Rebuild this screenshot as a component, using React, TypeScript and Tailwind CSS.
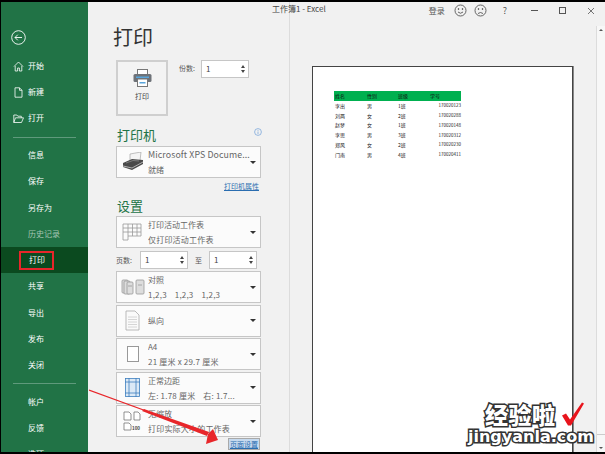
const font = { fontFamily: '"Noto Sans CJK SC", "Liberation Sans", sans-serif' };

const navTop = [
  { label: "开始", icon: "home" },
  { label: "新建", icon: "file" },
  { label: "打开", icon: "open" },
];
const navMid = ["信息", "保存", "另存为", "历史记录", "打印", "共享", "导出", "发布", "关闭"];
const navBottom = ["帐户", "反馈", "选项"];

const NavIcon = ({ name }: { name: string }) => (
  <svg width="11" height="11" viewBox="0 0 11 11" fill="none" stroke="white" strokeWidth="0.8">
    {name === "home" && <path d="M1 5.500 5.500 1 10 5.500M2.200 5v5h2.400V7h1.800v3h2.400V5" />}
    {name === "file" && <path d="M2 .8h4.500L9 3.300V10.200H2ZM6.500.8v2.500H9" />}
    {name === "open" && <path d="M.8 9.500V2h3l1 1.200h3.500v1.600M.8 9.500 2.500 4.800H10.500L8.500 9.500Z" />}
  </svg>
);

const Caret = () => (
  <div className="w-0 h-0 border-l-[3px] border-r-[3px] border-t-[3px] border-l-transparent border-r-transparent border-t-[#333] shrink-0" />
);

const Spinner = ({ w }: { w: string }) => (
  <div className={`${w} h-[18px] bg-white border border-[#c6c6c6] flex items-center justify-between pl-1 pr-[3px] text-[8px] text-[#444]`}>
    <span>1</span>
    <div className="flex flex-col gap-[2px]">
      <div className="w-0 h-0 border-l-[2px] border-r-[2px] border-b-[3px] border-l-transparent border-r-transparent border-b-[#444]" />
      <div className="w-0 h-0 border-l-[2px] border-r-[2px] border-t-[3px] border-l-transparent border-r-transparent border-t-[#444]" />
    </div>
  </div>
);

const Dropdown = ({ icon, line1, line2, latin }: { icon: React.ReactNode; line1: string; line2?: string; latin?: boolean }) => (
  <div className="h-[32px] w-[145px] shrink-0 bg-[#fbfbfb] border border-[#c6c6c6] flex items-center pr-[4px]">
    <div className="w-[31px] flex justify-center shrink-0">{icon}</div>
    <div className="flex-1 text-[8px] leading-[15px] text-[#666] whitespace-pre overflow-hidden">
      <div className={latin ? "text-[8.800px] tracking-[0.1px]" : ""}>{line1}</div>
      {line2 && <div className={latin ? "" : "tracking-[0.2px]"}>{line2}</div>}
    </div>
    <Caret />
  </div>
);

const Sheet = () => (
  <svg width="22" height="20" viewBox="0 0 22 20" fill="none" stroke="#999" strokeWidth="0.8">
    <path d="M1 2h18v12H6v4H1ZM1 6h18M1 10h18M6 2v12M10.500 2v12M15 2v12" />
  </svg>
);
const Collate = () => (
  <svg width="24" height="18" viewBox="0 0 24 18" fill="#ddd" stroke="#999" strokeWidth="0.8">
    <rect x="1" y="2" width="6" height="13" rx="1" />
    <rect x="3" y="3" width="6" height="13" rx="1" />
    <rect x="6" y="4" width="6" height="12" rx="1" />
    <rect x="15" y="2" width="8" height="14" rx="1" />
    <path d="M7 8h4M17 7h4" fill="none" />
  </svg>
);
const Portrait = () => (
  <svg width="15" height="21" viewBox="0 0 15 21" fill="#fafafa" stroke="#aaa" strokeWidth="0.8">
    <path d="M1 1h9l4 4v15H1Z" />
    <path d="M3 7h9M3 9.500h9M3 12h9M3 14.500h9M3 17h9" fill="none" stroke="#ccc" />
  </svg>
);
const Page = () => <div className="w-[12px] h-[16px] bg-white border border-[#999]" />;
const Margins = () => (
  <svg width="15" height="19" viewBox="0 0 15 19" fill="#dbe9f6" stroke="#3f7fbf" strokeWidth="0.8">
    <rect x="0.500" y="0.500" width="14" height="18" />
    <path d="M4 0v19M11 0v19M0 4h15M0 15h15" fill="none" />
  </svg>
);
const NoScale = () => (
  <svg width="20" height="22" viewBox="0 0 20 22" fill="white" stroke="#666" strokeWidth="0.7">
    <path d="M1 2h5l2 2v6H1ZM11 2h4l2 2v6h-6ZM1 13h5l2 2v5H1Z" />
    <text x="9" y="20" fontSize="4.500" fontWeight="700" fill="#444" stroke="none">100</text>
  </svg>
);

const PrinterIcon = () => (
  <svg width="19" height="18" viewBox="0 0 19 18">
    <rect x="4.500" y="0.500" width="10" height="6" fill="#fff" stroke="#777" />
    <rect x="0.500" y="5" width="18" height="8" rx="1.500" fill="#6e7278" />
    <rect x="3" y="7.500" width="13" height="1.500" fill="#59a5dc" />
    <rect x="4.500" y="10" width="10" height="7.500" fill="#fff" stroke="#777" />
    <rect x="6.500" y="13" width="6" height="1.500" fill="#59a5dc" />
  </svg>
);

const FaxIcon = () => (
  <svg width="22" height="20" viewBox="0 0 22 20">
    <path d="M8 2 19 0 18 9 8 10Z" fill="#f4f4f4" stroke="#999" strokeWidth="0.6" />
    <path d="M1 11 10 7 21 8V12L10 18 1 15Z" fill="#4a4a4a" />
    <path d="M1 14 10 16 21 10" stroke="#ccc" strokeWidth="0.8" fill="none" />
    <path d="M4 11 11 8.500 17 9" stroke="#888" strokeWidth="0.8" fill="none" />
  </svg>
);

const rows = [
  ["李出", "男", "1班", "170020123"],
  ["刘两", "女", "2班", "170020288"],
  ["赵梦", "女", "1班", "170020148"],
  ["李思", "男", "3班", "170020312"],
  ["郑风", "女", "2班", "170020230"],
  ["门南", "男", "4班", "170020411"],
];

const Face = ({ sad }: { sad?: boolean }) => (
  <svg width="13" height="13" viewBox="0 0 13 13" fill="none" stroke="#555" strokeWidth="0.9">
    <circle cx="6.500" cy="6.500" r="5.500" />
    <circle cx="4.500" cy="5" r="0.500" fill="#555" />
    <circle cx="8.500" cy="5" r="0.500" fill="#555" />
    <path d={sad ? "M4 9.500Q6.500 7.500 9 9.500" : "M4 8Q6.500 10.500 9 8"} />
  </svg>
);

export default function App() {
  return (
    <div className="relative w-[605px] h-[454px] overflow-hidden bg-[#f1f1f1] flex border-t-2 border-b-2 border-l border-black" style={font}>
      {/* sidebar */}
      <div className="w-[87px] shrink-0 bg-[#217346] text-white flex flex-col overflow-hidden">
        <div className="pl-[10px] pt-[28px] pb-[8px]">
          <svg width="15" height="15" viewBox="0 0 15 15" fill="none" stroke="white" strokeWidth="0.9">
            <circle cx="7.500" cy="7.500" r="6.800" />
            <path d="M11 7.500H4M6.800 4.700 4 7.500l2.800 2.800" />
          </svg>
        </div>
        {navTop.map((n) => (
          <div key={n.label} className="h-[26px] shrink-0 flex items-center text-[8px]">
            <div className="w-[27px] pl-[12px] shrink-0"><NavIcon name={n.icon} /></div>
            <span>{n.label}</span>
          </div>
        ))}
        <div className="h-px bg-[#5f9a7c] mx-[12px] mt-[6px] mb-[4px] shrink-0" />
        {navMid.map((n) => (
          <div
            key={n}
            className={`h-[26.250px] shrink-0 flex items-center pl-[27px] text-[8px] ${n === "打印" ? "bg-[#0b4a1f]" : ""} ${n === "历史记录" ? "text-[#a5c5b3]" : ""}`}
          >
            {n === "打印" ? (
              <span className="border-2 border-[#e8262a] h-[19px] w-[35px] -ml-[9px] pl-[8px] flex items-center">{n}</span>
            ) : (
              <span>{n}</span>
            )}
          </div>
        ))}
        <div className="h-px bg-[#5f9a7c] mx-[12px] mt-[5px] mb-[5px] shrink-0" />
        {navBottom.map((n) => (
          <div key={n} className="h-[26px] shrink-0 flex items-center pl-[27px] text-[8px]">{n}</div>
        ))}
      </div>

      {/* print settings */}
      <div className="w-[202px] shrink-0 pl-[28px] pt-[20px] flex flex-col border-r border-[#dcdcdc]">
        <div className="text-[20px] leading-[30px] text-[#333] -ml-[3px]">打印</div>
        <div className="flex mt-[8px]">
          <div className="w-[52px] h-[56px] bg-[#f3f3f3] border-2 border-[#cfcfcf] flex flex-col items-center pt-[7px] gap-[4px] text-[7px] text-[#444]">
            <PrinterIcon />
            <span>打印</span>
          </div>
          <span className="text-[7px] text-[#555] ml-[11px] mt-[3px]">份数:</span>
          <div className="ml-[6px]"><Spinner w="w-[48px]" /></div>
        </div>
        <div className="flex justify-between w-[145px] mt-[9px] items-start">
          <span className="text-[13px] leading-[20px] text-[#217346] ml-[1px]">打印机</span>
          <svg className="mt-[3px] mr-[-1px]" width="8" height="8" viewBox="0 0 8 8" fill="none" stroke="#6f9fd8" strokeWidth="0.7">
            <circle cx="4" cy="4" r="3.400" />
            <path d="M4 3.500v2.500M4 2v.8" />
          </svg>
        </div>
        <div className="mt-px">
          <Dropdown icon={<FaxIcon />} line1="Microsoft XPS Docume..." line2="就绪" latin />
        </div>
        <div className="w-[143px] text-right text-[7px] leading-[14px] mt-[1px] text-[#2a6db0] underline">打印机属性</div>
        <div className="text-[13px] leading-[20px] text-[#217346] mt-[3px] ml-[1px]">设置</div>
        <div className="flex flex-col">
          <Dropdown icon={<Sheet />} line1="打印活动工作表" line2="仅打印活动工作表" />
          <div className="flex items-center w-[145px] h-[24px] text-[7px] text-[#555]">
            <span className="w-[24px]">页数:</span>
            <Spinner w="w-[48px]" />
            <span className="w-[21px] text-center">至</span>
            <Spinner w="w-[48px]" />
          </div>
          <div className="flex flex-col gap-[1.500px] -mt-[1px]">
            <Dropdown icon={<Collate />} line1="对照" line2="1,2,3    1,2,3    1,2,3" />
            <Dropdown icon={<Portrait />} line1="纵向" />
            <Dropdown icon={<Page />} line1="A4" line2="21 厘米 x 29.7 厘米" />
            <Dropdown icon={<Margins />} line1="正常边距" line2="左: 1.78 厘米    右: 1.7..." />
            <Dropdown icon={<NoScale />} line1="无缩放" line2="打印实际大小的工作表" />
          </div>
          <div className="w-[144px] flex justify-end mt-px">
            <span className="bg-[#c5d9ee] border border-[#a9a9a9] px-[1px] text-[7px] leading-[10px] text-[#2a6db0] underline">页面设置</span>
          </div>
        </div>
      </div>

      {/* preview */}
      <div className="flex-1 flex flex-col min-w-0">
        <div className="h-[24px] shrink-0 flex items-center pb-[7px] text-[7px] text-[#444]">
          <span className="absolute left-[271px] top-[1px] text-[8px]">工作簿1 - Excel</span>
          <div className="ml-auto flex items-center mr-[10px] text-[#555]">
            <span className="text-[8px]">登录</span>
            <div className="ml-[9px]"><Face /></div>
            <div className="ml-[7px]"><Face sad /></div>
            <span className="ml-[16px] text-[9px]">?</span>
            <div className="ml-[24px] w-[7px] h-px bg-[#555]" />
            <div className="ml-[21px] w-[7px] h-[7px] border border-[#555]" />
            <svg className="ml-[21px]" width="8" height="8" viewBox="0 0 8 8" stroke="#555" strokeWidth="0.8">
              <path d="M1 1l6 6M7 1 1 7" />
            </svg>
          </div>
        </div>
        <div className="flex-1 flex min-h-0">
          <div className="flex-1 pl-[22px] pt-[40px] min-w-0">
            <div className="w-[261px] h-[400px] bg-white border border-[#444] pl-[21px] pt-[24px] shadow-[1px_0_0_#888]">
              <div className="w-[127px] text-[5px] text-[#222]">
                <div className="h-[10px] bg-[#00b050] grid grid-cols-[32px_31px_32px_31px] items-center pl-[1px] text-[#111]">
                  <span>姓名</span><span>性别</span><span>班级</span><span>学号</span>
                </div>
                {rows.map((r) => (
                  <div key={r[3]} className="h-[9.700px] grid grid-cols-[32px_31px_32px_31px] items-center pl-[1px]">
                    <span>{r[0]}</span><span>{r[1]}</span><span>{r[2]}</span><span className="text-right text-[4.500px]">{r[3]}</span>
                  </div>
                ))}
              </div>
            </div>
          </div>
          <div className="w-[9px] shrink-0 bg-[#f7f7f7] border-l border-[#dcdcdc] flex flex-col items-center justify-between py-[3px]">
            <div className="w-0 h-0 border-l-[2px] border-r-[2px] border-b-[2px] border-l-transparent border-r-transparent border-b-[#555]" />
            <div className="w-full h-px bg-[#ccc] mt-[390px]" />
            <div className="w-0 h-0 border-l-[2px] border-r-[2px] border-t-[2px] border-l-transparent border-r-transparent border-t-[#555]" />
          </div>
        </div>
      </div>

      {/* red annotation arrow */}
      <svg className="absolute left-[88px] top-[378px]" width="135" height="66" viewBox="0 0 135 66">
        <path d="M0 10 60 32" stroke="#e8262a" strokeWidth="1.300" fill="none" />
        <path d="M55 29 120 52 118 56 53 31Z" fill="#e8262a" />
        <path d="M124 49 129 60 117 64 119 54Z" fill="#e8262a" />
      </svg>

      {/* watermark */}
      <div className="absolute left-[466px] top-[400px] flex flex-col items-start font-bold text-white" style={{ fontFamily: '"Noto Sans CJK SC", sans-serif' }}>
        <div className="flex items-center">
          <span className="text-[23px] leading-[25px] tracking-[0.500px] [-webkit-text-stroke:3px_#333] [paint-order:stroke_fill] ml-[18px] font-black">经验啦</span>
          <svg className="ml-[5px] -mt-[2px]" width="24" height="25" viewBox="0 0 24 24" fill="#e8141c">
            <path d="M1 14 5 12 9 18 21 1 23 2 10 24 7 24Z" />
          </svg>
        </div>
        <span className="text-[16px] leading-[20px] ml-[1px] [-webkit-text-stroke:3px_#333] [paint-order:stroke_fill]" style={{ fontFamily: '"DejaVu Sans", sans-serif' }}>jingyanla.com</span>
      </div>
    </div>
  );
}
